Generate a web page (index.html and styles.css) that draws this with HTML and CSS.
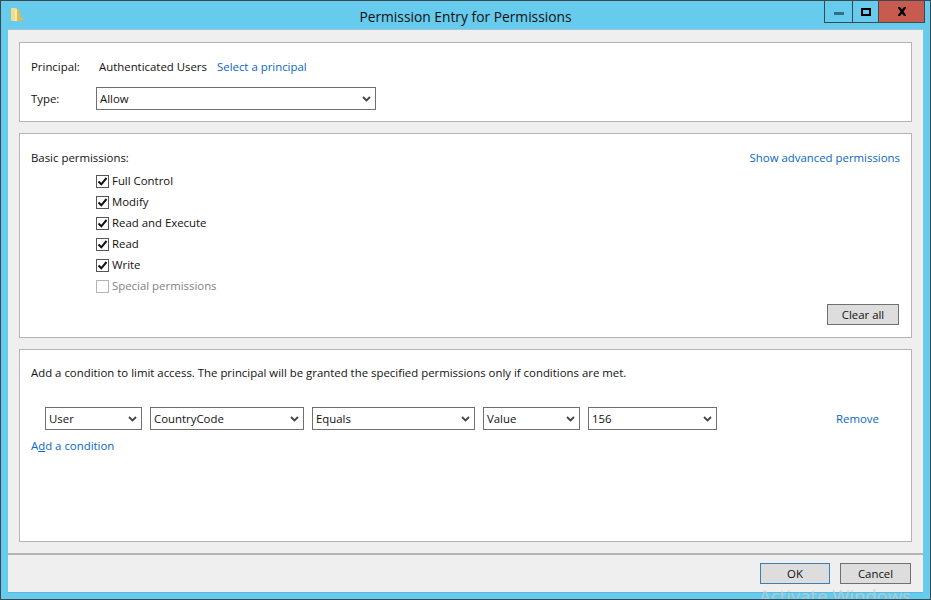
FILE: index.html
```html
<!DOCTYPE html>
<html lang="en">
<head>
  <meta charset="UTF-8" />
  <title>Permission Entry for Permissions</title>
  <link rel="stylesheet" href="styles.css">
</head>
<body>
  <div class="window">
    <div class="titlebar">
      <svg class="folder" width="12" height="16" viewBox="0 0 12 16">
        <path d="M0 1h5l1 1v12H1l-1-1z" fill="#f5dc8c"/>
        <path d="M6 2h2l2 9h2v2l-2 1H6z" fill="#e3b94f"/>
        <path d="M4 3h2v11H4z" fill="#fbeeb8"/>
      </svg>
      <div class="title">Permission Entry for Permissions</div>
      <div class="controls">
        <div class="ctl ctl-min"><span class="min-bar"></span></div>
        <div class="ctl ctl-max"><span class="max-box"></span></div>
        <div class="ctl ctl-close">
          <svg width="10" height="9" viewBox="0 0 10 9"><path d="M1 0h2l2 2.500L7 0h2v1L6.500 4.500 9 8v1H7L5 6.500 3 9H1V8l2.500-3.500L1 1z" fill="#000"/></svg>
        </div>
      </div>
    </div>

    <div class="client">
      <div class="panels">
        <section class="panel panel-principal">
          <div class="row-principal">
            <span class="lbl">Principal:</span>
            <span class="principal-name">Authenticated Users</span>
            <a class="link">Select a principal</a>
          </div>
          <div class="row-type">
            <span class="lbl">Type:</span>
            <div class="combo combo-type"><span>Allow</span><svg class="chev" viewBox="0 0 9 6"><path d="M1 1l3.500 3.500L8 1" fill="none" stroke="#444" stroke-width="1.800"/></svg></div>
          </div>
        </section>

        <section class="panel panel-basic">
          <div class="basic-head">
            <span>Basic permissions:</span>
            <a class="link">Show advanced permissions</a>
          </div>
          <ul class="checks">
            <li><span class="box"><svg viewBox="0 0 11 11"><path d="M1.500 5.500l2.800 2.800L9.500 2" fill="none" stroke="#111" stroke-width="2"/></svg></span><span class="txt">Full Control</span></li>
            <li><span class="box"><svg viewBox="0 0 11 11"><path d="M1.500 5.500l2.800 2.800L9.500 2" fill="none" stroke="#111" stroke-width="2"/></svg></span><span class="txt">Modify</span></li>
            <li><span class="box"><svg viewBox="0 0 11 11"><path d="M1.500 5.500l2.800 2.800L9.500 2" fill="none" stroke="#111" stroke-width="2"/></svg></span><span class="txt">Read and Execute</span></li>
            <li><span class="box"><svg viewBox="0 0 11 11"><path d="M1.500 5.500l2.800 2.800L9.500 2" fill="none" stroke="#111" stroke-width="2"/></svg></span><span class="txt">Read</span></li>
            <li><span class="box"><svg viewBox="0 0 11 11"><path d="M1.500 5.500l2.800 2.800L9.500 2" fill="none" stroke="#111" stroke-width="2"/></svg></span><span class="txt">Write</span></li>
            <li class="disabled"><span class="box"></span><span class="txt">Special permissions</span></li>
          </ul>
          <div class="basic-foot"><button class="btn btn-clear">Clear all</button></div>
        </section>

        <section class="panel panel-cond">
          <p class="cond-text">Add a condition to limit access. The principal will be granted the specified permissions only if conditions are met.</p>
          <div class="cond-row">
            <div class="combo w-user"><span>User</span><svg class="chev" viewBox="0 0 9 6"><path d="M1 1l3.500 3.500L8 1" fill="none" stroke="#444" stroke-width="1.800"/></svg></div>
            <div class="combo w-code"><span>CountryCode</span><svg class="chev" viewBox="0 0 9 6"><path d="M1 1l3.500 3.500L8 1" fill="none" stroke="#444" stroke-width="1.800"/></svg></div>
            <div class="combo w-eq"><span>Equals</span><svg class="chev" viewBox="0 0 9 6"><path d="M1 1l3.500 3.500L8 1" fill="none" stroke="#444" stroke-width="1.800"/></svg></div>
            <div class="combo w-val"><span>Value</span><svg class="chev" viewBox="0 0 9 6"><path d="M1 1l3.500 3.500L8 1" fill="none" stroke="#444" stroke-width="1.800"/></svg></div>
            <div class="combo w-num"><span>156</span><svg class="chev" viewBox="0 0 9 6"><path d="M1 1l3.500 3.500L8 1" fill="none" stroke="#444" stroke-width="1.800"/></svg></div>
            <a class="link remove">Remove</a>
          </div>
          <a class="link add-cond">A<u>d</u>d a condition</a>
        </section>
      </div>

      <div class="footer">
        <button class="btn btn-ok">OK</button>
        <button class="btn btn-cancel">Cancel</button>
      </div>
    </div>
    <div class="watermark">Activate Windows</div>
  </div>
</body>
</html>
```

FILE: styles.css
```css
html, body {
  margin: 0;
  height: 600px;
  overflow: hidden;
}
body {
  font-family: 'Open Sans', sans-serif;
  font-size: 11.4px;
  color: #111;
}
.window {
  position: relative;
  box-sizing: border-box;
  width: 931px;
  height: 600px;
  overflow: hidden;
  background: #66cbec;
  border: 1px solid #3c4a50;
  padding: 0 7px 7px 7px;
  display: flex;
  flex-direction: column;
}
.titlebar {
  height: 29px;
  display: flex;
  position: relative;
  flex: none;
}
.folder {
  margin: 6px 0 0 3px;
}
.title {
  position: absolute;
  left: 0;
  right: 0;
  top: 6px;
  text-align: center;
  font-size: 13.8px;
  line-height: 19px;
  color: #111;
}
.controls {
  position: absolute;
  top: 0;
  right: -2px;
  display: flex;
  height: 21px;
  border: 1px solid #3c4a50;
  border-top: none;
}
.ctl {
  display: flex;
  align-items: center;
  justify-content: center;
  box-sizing: border-box;
}
.ctl-min { width: 28px; border-right: 1px solid #3c4a50; }
.ctl-max { width: 26px; border-right: 1px solid #3c4a50; }
.ctl-close { width: 45px; background: #c75b50; }
.min-bar {
  display: block;
  width: 10px;
  height: 3px;
  margin-top: 4px;
  background: #2f6f86;
}
.max-box {
  display: block;
  box-sizing: border-box;
  width: 10px;
  height: 8px;
  border: 2px solid #000;
}
.client {
  flex: 1;
  background: #efefef;
  box-shadow: 0 -1px 0 #9ec3d2, 0 1px 0 #5cb8d8;
  display: flex;
  flex-direction: column;
  min-height: 0;
}
.panels {
  padding: 12px 11px 0 11px;
  display: flex;
  flex-direction: column;
  gap: 11px;
}
.panel {
  box-sizing: border-box;
  background: #fff;
  border: 1px solid #b4b4b4;
}
.panel-principal { height: 80px; padding: 0 11px; }
.panel-basic { height: 205px; padding: 0 11px; display: flex; flex-direction: column; }
.panel-cond { height: 193px; padding: 0 11px; }
.link {
  color: #0a66c8;
}
.row-principal {
  display: flex;
  align-items: center;
  height: 20px;
  margin-top: 13px;
}
.lbl {
  width: 68px;
  flex: none;
}
.principal-name { width: 118px; }
.row-type {
  display: flex;
  align-items: center;
  margin-top: 11px;
}
.row-type .lbl { width: 65px; }
.combo {
  box-sizing: border-box;
  height: 23px;
  border: 1px solid #707070;
  background: #fff;
  display: flex;
  align-items: center;
  justify-content: space-between;
  padding: 0 4px 0 3px;
}
.combo-type { width: 280px; }
.chev { width: 9px; height: 6px; }
.basic-head {
  display: flex;
  justify-content: space-between;
  align-items: center;
  height: 20px;
  margin-top: 13px;
}
.checks {
  list-style: none;
  margin: 4px 0 0 65px;
  padding: 0;
}
.checks li {
  display: flex;
  align-items: center;
  height: 21px;
}
.txt { padding-bottom: 2px; }
.box {
  box-sizing: border-box;
  width: 13px;
  height: 13px;
  margin-right: 3px;
  border: 1px solid #555;
  background: #fff;
  display: flex;
}
.box svg { width: 11px; height: 11px; }
.disabled { color: #7f7f7f; }
.disabled .box { border-color: #b4b4b4; }
.basic-foot {
  display: flex;
  justify-content: flex-end;
  margin: 7px 1px 0 0;
}
.btn {
  box-sizing: border-box;
  height: 21px;
  padding: 0;
  background: #dddddd;
  border: 1px solid #707070;
  font: inherit;
  color: #111;
}
.btn-clear { width: 72px; }
.cond-text {
  margin: 15px 0 0 0;
  line-height: 16px;
}
.cond-row {
  display: flex;
  align-items: center;
  margin: 26px 0 0 14px;
  gap: 8px;
}
.w-user { width: 97px; }
.w-code { width: 154px; }
.w-eq { width: 163px; }
.w-val { width: 97px; }
.w-num { width: 129px; }
.remove { margin-left: 111px; }
.add-cond {
  display: block;
  margin-top: 8px;
  line-height: 16px;
}
.footer {
  flex: 1;
  margin-top: 11px;
  border-top: 2px solid #b4b4b4;
  display: flex;
  justify-content: flex-end;
  gap: 10px;
  padding: 8px 12px 0 0;
}
.btn-ok { width: 70px; border-color: #3c7fb1; }
.btn-cancel { width: 71px; }
.watermark {
  position: absolute;
  left: 758px;
  top: 582px;
  font-size: 18.5px;
  color: #c4cfd3;
  opacity: 0.7;
  white-space: nowrap;
}
```
